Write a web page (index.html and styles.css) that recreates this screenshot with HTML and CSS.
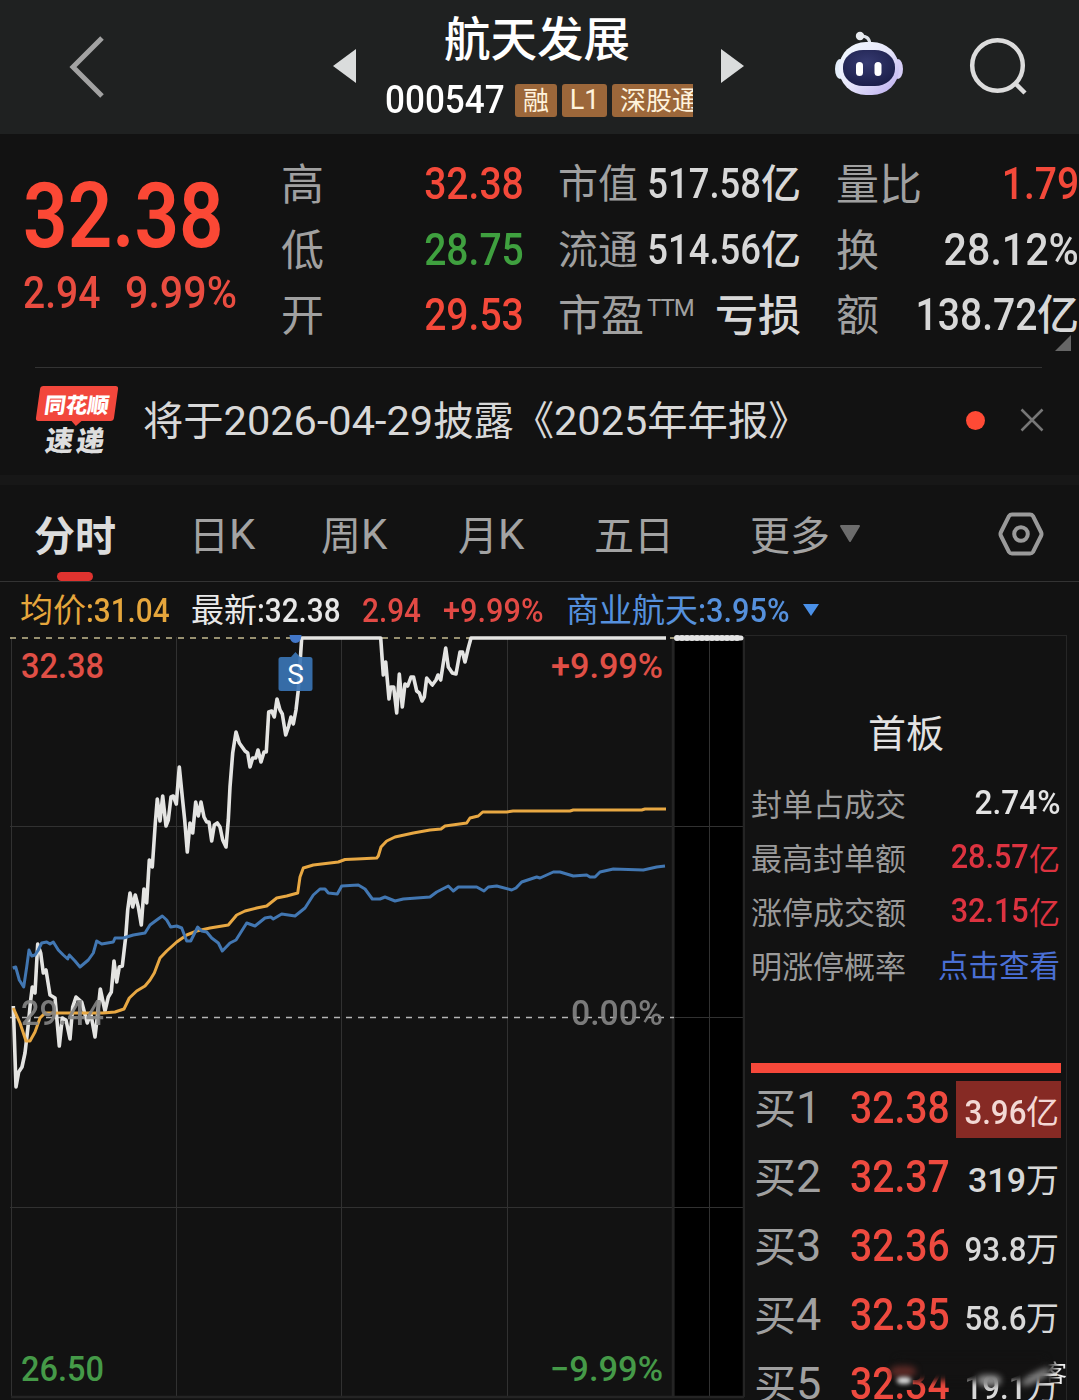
FILE: index.html
```html
<!DOCTYPE html>
<html lang="zh-CN">

<head>
    <meta charset="UTF-8">
    <meta name="viewport" content="width=device-width, initial-scale=1.0">
    <title>航天发展 000547</title>
    <link rel="stylesheet" href="styles.css">
</head>

<body>
    <header class="topbar">
        <svg class="back" viewBox="0 0 40 64"><path d="M34 3 L5 32 L34 61" /></svg>
        <svg class="arrow prev" viewBox="0 0 24 34"><path d="M0 17 L23 0 V34 Z" /></svg>
        <div class="stock">
            <h1>航天发展</h1>
            <div class="code-row">
                <span class="code"><span class="n left">000547</span></span>
                <span class="tag">融</span>
                <span class="tag l1">L1</span>
                <span class="tag last">深股通</span>
            </div>
        </div>
        <svg class="arrow next" viewBox="0 0 24 34"><path d="M23 17 L0 0 V34 Z" /></svg>
        <svg class="robot" viewBox="0 0 70 66">
            <defs>
                <linearGradient id="shell" x1="0" y1="0" x2="1" y2="1">
                    <stop offset="0" stop-color="#f4fbff" />
                    <stop offset=".5" stop-color="#e6e6fa" />
                    <stop offset="1" stop-color="#b9a9ee" />
                </linearGradient>
                <radialGradient id="face" cx=".45" cy=".35" r=".7">
                    <stop offset="0" stop-color="#363a70" />
                    <stop offset="1" stop-color="#1a1d48" />
                </radialGradient>
            </defs>
            <path d="M26 5 Q35 4 36 13" fill="none" stroke="#dfe3ea" stroke-width="3" />
            <circle cx="26" cy="5" r="4.2" fill="#e8ebf0" />
            <ellipse cx="6" cy="38" rx="5" ry="10" fill="#e4eefa" />
            <ellipse cx="64" cy="38" rx="5" ry="10" fill="#d6cdf6" />
            <rect x="5" y="11" width="60" height="53" rx="27" ry="26" fill="url(#shell)" />
            <rect x="9" y="19" width="52" height="36" rx="20" ry="17" fill="url(#face)" />
            <rect x="22" y="31" width="7" height="14" rx="3.5" fill="#fff" />
            <rect x="40.500" y="31" width="7" height="14" rx="3.5" fill="#fff" />
        </svg>
        <svg class="search" viewBox="0 0 60 60"><circle cx="28.500" cy="28.500" r="25.300" /><path d="M46 46 L56 56" /></svg>
    </header>

    <section class="quote">
        <div class="price">
            <div class="big"><span class="n left">32.38</span></div>
            <div class="change"><span class="n left">2.94</span><span class="n left pct">9.99%</span></div>
        </div>
        <dl class="col col-a">
            <dt>高</dt><dd class="up"><span class="n">32.38</span></dd>
            <dt>低</dt><dd class="down"><span class="n">28.75</span></dd>
            <dt>开</dt><dd class="up"><span class="n">29.53</span></dd>
        </dl>
        <dl class="col col-b">
            <dt>市值</dt><dd><span class="n">517.58</span>亿</dd>
            <dt>流通</dt><dd><span class="n">514.56</span>亿</dd>
            <dt class="pe">市盈<sup>TTM</sup></dt><dd class="loss">亏损</dd>
        </dl>
        <dl class="col col-c">
            <dt>量比</dt><dd class="up"><span class="n">1.79</span></dd>
            <dt>换</dt><dd><span class="n pct">28.12%</span></dd>
            <dt>额</dt><dd><span class="n">138.72</span>亿</dd>
        </dl>
        <svg class="corner" viewBox="0 0 16 16"><path d="M16 0 V16 H0 Z" /></svg>
    </section>

    <section class="notice">
        <div class="express">
            <span class="bubble">同花顺</span>
            <span class="sudi">速递</span>
        </div>
        <p>将于<span class="date">2026-04-29</span>披露《<span class="date">2025</span>年年报》</p>
        <i class="dot"></i>
        <svg class="close" viewBox="0 0 24 24"><path d="M1.500 1.500 L22.500 22.500 M22.500 1.500 L1.500 22.500" /></svg>
    </section>

    <nav class="tabs">
        <a class="active">分时</a>
        <a>日<b>K</b></a>
        <a>周<b>K</b></a>
        <a>月<b>K</b></a>
        <a>五日</a>
        <a>更多<svg class="caret" viewBox="0 0 22 18"><path d="M2 1 H20 L11 16 Z" /></svg></a>
        <svg class="setting" viewBox="0 0 46 44">
            <path d="M14 2.500 H32 Q34 2.500 35 4 L43 20 Q44 22 43 24 L35 40 Q34 41.500 32 41.500 H14 Q12 41.500 11 40 L3 24 Q2 22 3 20 L11 4 Q12 2.500 14 2.500 Z" />
            <circle cx="23" cy="22" r="6.800" />
        </svg>
    </nav>

    <div class="legend">
        <span class="avg">均价<span class="n left">:31.04</span></span>
        <span class="latest">最新<span class="n left">:32.38</span></span>
        <span class="rise"><span class="n left">2.94</span></span>
        <span class="rise"><span class="n left pct">+9.99%</span></span>
        <span class="sector">商业航天<span class="n left pct">:3.95%</span></span>
        <svg viewBox="0 0 18 12"><path d="M1 0 H17 L9 12 Z" /></svg>
    </div>

    <main class="trade">
        <svg class="chart" viewBox="0 634 745 766">
            <rect x="675" y="637" width="69" height="760" fill="#000" />
            <g class="grid">
                <path d="M11.500 637 V1397 M176.500 637 V1397 M341.500 637 V1397 M507.500 637 V1397 M709.500 637 V1397" />
                <path d="M10 826.500 H744 M10 1207.500 H744 M672 1017.500 H744" />
                <path class="frame" d="M673 637 V1397 M744 637 V1397 M11 1397 H744" />
            </g>
            <path class="dash top" d="M10 638 H674" />
            <path class="dash" d="M10 1017.500 H674" />
            <polyline class="line price-line" points="13.3,1006 16,1087 18.7,1072 22,1067 25,1053 28,1027 30.7,1000 32.3,987 35,993 37.7,944 40.7,953 43.3,973 46,970 50,995 55,998 59.3,1046 62.3,1018 66,1020 70,1039 72.7,1007 76,997 81.7,1002 87.3,1023 90.7,1013 95,1037 97.3,1017 100.3,989 105,1011 108.3,997 111.3,992 114,961 116.7,982 119.3,967 122.3,966 125.7,937 127.7,910 130,893 132.7,907 135.3,895 138.3,907 141.3,925 144,889 146.7,903 149.3,860 152.3,867 155.3,823 157.3,799 160,821 162.7,796 166,826 168.3,820 171,797 173.3,796 176.3,804 179.3,767 182.3,797 184.7,820 187.3,852 190,823 192.7,833 195.7,802 198.3,816 201,802 204,817 206.7,822 209,822 211.7,841 214.3,825 217.3,823 220,827 222.7,840 226,847 228.3,820 230,787 232.7,753 236,732 239.3,743 245,751 247.7,753 250,767 252.7,758 255.7,758 258,750 261,762 264,752 266.3,752 268.7,712 271.7,711 274.3,717 277,699 280,710 282.3,714 285.7,735 288.7,726 291,717 293.3,724 296,710 298.3,690 301.7,638 380.7,638 383.3,675 385.7,662 389,699 390.7,687 393.7,687 396.7,713 399.3,674 402.3,707 405,684 407.7,686 411,677 413.5,677 416.7,691 419.3,693 422,701 424.3,697 426.7,678 432.3,685 436,680 438,675 440.7,680 443.3,663 445.7,648 448.3,667 452.3,673 456,674 460,652 462.5,652 465,662 468.3,648 471,638 666,638" />
            <polyline class="line avg-line" points="13.3,1008 20,1023 26,1041 30,1041 35,1032 40,1018 45,1013 67,1013 103,1013 115,1012 124,1009 129.3,998 136.7,991 145,986 150,980 154.3,973 160,958 166.7,951 176.7,942 186.7,935 196.7,931 210,928 228.3,925 236.7,915 245,911 256.7,908 266.7,906 276.7,898 286.7,896 297.7,893 300,877 303.3,868 313.3,865 338.3,862 345,859.500 356.7,859 376.7,858 378.3,856 381,847 386.7,841 395,837 413.3,833 430,830 441,829 445,826 466.7,823 470,818 478.3,816 482.7,812 506.7,812 513,811 570,811 573.3,810 641.7,810 645,809 666,809" />
            <polyline class="line sector-line" points="12.7,968 15.7,967 19.3,980 23.7,987 26.7,967 29,950 31.7,956 35,955 38.3,950 41.7,943 46.7,942 50,944 53.3,942 58.3,950 63.3,955 67.7,959 69.3,955 75,961 80,967 88.3,960 93.3,953 96.7,941 101.7,944 113.3,942 115,938 123.3,938 133.3,935 145,933 150,925 156.7,920 162.3,916 166.7,920 170.7,927 176.7,926 181.7,928 186.7,941 190.7,941 197.7,927 201.7,931 206.7,932 211.7,938 218.3,943 222.3,951 230,943 236,940 246.7,923 255,926 265,918 270.7,917 273.3,919 281.7,914 295,916 305,908 313.3,895 320,889 325,889 328.3,893 337.3,894 341.7,886 358.3,885 365,889 372.3,899 380,899 385,897 395,901 403.3,899 430,897 436.7,892 448.3,886 453.3,891 458.3,887 476.7,887 484,891 488.3,887 496.7,886 511.7,890 516,888 521.7,882 536.7,877 540,878 553.3,872 560,872 573.3,876 586.7,875 590,877 595,877 600,872 613.3,869 643.3,870 656.7,867 665,866" />
            <path class="sealed" d="M677 638 H741" />
            <path class="sealed bumps" d="M677 638 H742" />

            <path class="sell" d="M289.500 635 H301.500 Q301 643 295.500 643 Q290 643 289.500 635 Z" />
            <path class="sell box" d="M291 657 L295.500 652 L300 657 H310 Q312.500 657 312.500 659.500 V688.500 Q312.500 691 310 691 H281 Q278.500 691 278.500 688.500 V659.500 Q278.500 657 281 657 Z" />
            <text class="s" x="295.500" y="684" text-anchor="middle">S</text>

            <text class="axis up" x="21" y="678" textLength="83" lengthAdjust="spacingAndGlyphs">32.38</text>
            <text class="axis up" x="551" y="678" textLength="112" lengthAdjust="spacingAndGlyphs">+9.99%</text>
            <text class="axis flat" x="21" y="1025" textLength="83" lengthAdjust="spacingAndGlyphs">29.44</text>
            <text class="axis flat" x="571" y="1025" textLength="92" lengthAdjust="spacingAndGlyphs">0.00%</text>
            <text class="axis down" x="21" y="1381" textLength="83" lengthAdjust="spacingAndGlyphs">26.50</text>
            <text class="axis down" x="550" y="1381" textLength="113" lengthAdjust="spacingAndGlyphs">−9.99%</text>
        </svg>

        <aside class="side">
            <h2>首板</h2>
            <ul class="board">
                <li>封单占成交<span class="val white"><span class="n pct">2.74%</span></span></li>
                <li>最高封单额<span class="val"><span class="n">28.57</span>亿</span></li>
                <li>涨停成交额<span class="val"><span class="n">32.15</span>亿</span></li>
                <li>明涨停概率<span class="link">点击查看</span></li>
            </ul>
            <div class="bar"></div>
            <ul class="bids">
                <li><span class="lv">买<b>1</b></span><span class="px"><span class="n left">32.38</span></span><span class="vol hot"><span class="n">3.96</span>亿</span></li>
                <li><span class="lv">买<b>2</b></span><span class="px"><span class="n left">32.37</span></span><span class="vol whole"><span class="n">319</span>万</span></li>
                <li><span class="lv">买<b>3</b></span><span class="px"><span class="n left">32.36</span></span><span class="vol"><span class="n">93.8</span>万</span></li>
                <li><span class="lv">买<b>4</b></span><span class="px"><span class="n left">32.35</span></span><span class="vol"><span class="n">58.6</span>万</span></li>
                <li><span class="lv">买<b>5</b></span><span class="px"><span class="n left">32.34</span></span><span class="vol"><span class="n">19.1</span>万</span></li>
            </ul>
            <!-- smeared strip over the last row -->
            <div class="smear"><i class="s1"></i><i class="s2"></i><i class="s3"></i><i class="s4"></i><i class="s5"></i><em>客</em></div>
        </aside>
    </main>
</body>

</html>
```
FILE: styles.css
```css
* {
    box-sizing: border-box;
}

body {
    margin: 0;
    width: 1079px;
    height: 1400px;
    overflow: hidden;
    background-color: #121212;
    color: #d8d8d8;
    font-family: "Noto Sans CJK SC", sans-serif;
}

h1, h2, p, ul, dl, dd {
    margin: 0;
    padding: 0;
    font-weight: normal;
    list-style: none;
}

svg {
    display: block;
    flex: none;
}

/* narrow digits */
.n {
    display: inline-block;
    flex: none;
    font-family: Roboto, sans-serif;
    font-weight: 500;
    transform: scaleX(.868);
    transform-origin: right;
}

.n.pct {
    transform: scaleX(.915);
}

.n.left {
    transform-origin: left;
}

.up {
    color: #f4493a;
}

.down {
    color: #3fa03f;
}

/* header */
.topbar {
    display: flex;
    height: 134px;
    background-color: #1f2121;
}

.back {
    width: 40px;
    height: 64px;
    margin: 35px 0 0 68px;
    fill: none;
    stroke: #a2a2a2;
    stroke-width: 5;
}

.arrow {
    width: 24px;
    height: 34px;
    margin-top: 49px;
    fill: #dadcdc;
}

.prev {
    margin-left: 225px;
}

.stock {
    width: 308px;
    margin: 0 28px 0 28px;
    color: #fff;
}

.stock h1 {
    height: 78px;
    padding-left: 59px;
    font-size: 46.500px;
    font-weight: 500;
    line-height: 71px;
    white-space: nowrap;
}

.code-row {
    display: flex;
    align-items: center;
    height: 44px;
    overflow: hidden;
}

.code {
    display: flex;
    width: 130px;
    flex: none;
    font-size: 39px;
    line-height: 44px;
}

.code .n {
    transform: scaleX(.9);
}

.tag {
    flex: none;
    width: 42px;
    height: 33px;
    margin-right: 5px;
    border-radius: 3px;
    background-color: #9c673a;
    color: #fff3dc;
    font-size: 26px;
    line-height: 30px;
    text-align: center;
}

.tag.l1 {
    width: 45px;
    font-family: Roboto, sans-serif;
    font-size: 27px;
    line-height: 33px;
}

.tag.last {
    width: 96px;
    margin: 0;
    padding-left: 8px;
    text-align: left;
}

.next {
    margin-right: 89px;
}

.robot {
    width: 70px;
    height: 66px;
    margin-top: 31px;
}

.search {
    width: 60px;
    height: 60px;
    margin: 37px 0 0 65px;
    fill: none;
    stroke: #dcdcdc;
    stroke-width: 4.500;
}

/* quote */
.quote {
    position: relative;
    display: flex;
    height: 233px;
    padding-top: 17px;
}

.quote::after {
    content: "";
    position: absolute;
    left: 35px;
    right: 37px;
    bottom: -1px;
    height: 1px;
    background-color: #333;
}

.price {
    width: 281px;
    padding-left: 23px;
    color: #fb4835;
}

.big {
    display: flex;
    height: 118px;
    padding-top: 14px;
    font-size: 90px;
    line-height: 104px;
}

.big .n {
    font-weight: 600;
}

.change {
    display: flex;
    gap: 13px;
    font-size: 45px;
    line-height: 48px;
    color: #e94c40;
}

.col {
    display: grid;
    grid-auto-rows: 65.500px;
    height: 197px;
    line-height: 65px;
    white-space: nowrap;
}

.col dt {
    color: #a0a0a0;
    font-size: 43px;
    line-height: 61px;
}

.col dd {
    display: flex;
    justify-content: flex-end;
    font-size: 43px;
    font-weight: 500;
    line-height: 60px;
}

.col dd .n {
    font-size: 45px;
    line-height: 65px;
}

.col-a {
    grid-template-columns: 143px 100px;
    width: 277px;
}

.col-b {
    grid-template-columns: 81px 162px;
    width: 278px;
}

.col-b dt {
    font-size: 40px;
}

.col-b dd {
    font-size: 40px;
}

.col-b dd .n {
    font-size: 42px;
    line-height: 65px;
}

.col-b .pe {
    font-size: 43px;
}

.pe sup {
    margin-left: 3px;
    font-family: Roboto, sans-serif;
    font-size: 24px;
    letter-spacing: -1px;
    line-height: 0;
    vertical-align: 15px;
}

.col-b .loss {
    font-size: 43px;
    line-height: 61px;
}

.col-c {
    grid-template-columns: 70px 173px;
}

.col-c dd {
    font-size: 42px;
}

.corner {
    position: absolute;
    left: 1055px;
    top: 201px;
    width: 16px;
    height: 16px;
    fill: #666;
}

/* notice */
.notice {
    display: flex;
    align-items: center;
    height: 118px;
    padding: 0 35px 2px 36px;
    border-bottom: 10px solid #171717;
}

.express {
    width: 82px;
    height: 68px;
    margin: 0 25px 0 0;
    color: #fff;
    font-weight: 900;
    text-align: center;
}

.bubble {
    position: relative;
    display: block;
    width: 78px;
    height: 35px;
    margin-left: 2px;
    border-radius: 3px;
    background-color: #f2473c;
    font-size: 21.500px;
    line-height: 35px;
    transform: skewX(-8deg);
}

.bubble::after {
    content: "";
    position: absolute;
    left: 36px;
    top: 35px;
    border: 5px solid transparent;
    border-top-color: #f2473c;
    border-bottom: 0;
}

.sudi {
    display: block;
    font-size: 28px;
    letter-spacing: 3px;
    line-height: 36px;
    color: #dedede;
    transform: skewX(-8deg);
}

.notice p {
    flex: 1;
    font-size: 40.300px;
    line-height: 56px;
    padding-bottom: 2px;
    white-space: nowrap;
}

.date {
    font-family: Roboto, sans-serif;
    font-size: 41.500px;
}

.dot {
    width: 19px;
    height: 19px;
    margin-right: 35px;
    border-radius: 50%;
    background-color: #ff4a35;
}

.close {
    width: 24px;
    height: 24px;
    fill: none;
    stroke: #777;
    stroke-width: 2.500;
}

/* tabs */
.tabs {
    display: grid;
    grid-template-columns: 155px 132px 137px 136px 156px 248px 46px;
    height: 97px;
    padding-left: 34px;
    border-bottom: 1px solid #333;
    color: #a3a3a3;
    font-size: 40px;
    line-height: 96px;
}

.tabs a {
    position: relative;
    display: flex;
    height: 96px;
}

.tabs b {
    font-family: Roboto, sans-serif;
    font-size: 42px;
    font-weight: 400;
    line-height: 100px;
}

.tabs .active {
    color: #dcdcdc;
    font-size: 41px;
    font-weight: 700;
}

.tabs .active::after {
    content: "";
    position: absolute;
    left: 23px;
    bottom: 0;
    width: 36px;
    height: 9px;
    border-radius: 5px;
    background-color: #e0332f;
}

.caret {
    width: 22px;
    height: 18px;
    margin: 40px 0 0 9px;
    fill: #6c6c6c;
    stroke: #6c6c6c;
    stroke-linejoin: round;
    stroke-width: 2;
}

.setting {
    width: 46px;
    height: 44px;
    margin-top: 27px;
    fill: none;
    stroke: #9a9a9a;
    stroke-width: 4;
}

/* legend above the chart */
.legend {
    display: grid;
    grid-template-columns: 171px 171px 81px 123px 236px 18px;
    align-items: center;
    height: 52px;
    padding: 3px 0 0 20px;
    font-size: 33px;
    line-height: 46px;
    white-space: nowrap;
}

.legend .n {
    font-size: 33px;
    transform: scaleX(.9);
}

.legend .n.pct {
    transform: scaleX(.93);
}

.avg {
    color: #e5a63c;
}

.latest {
    color: #e8e8e8;
}

.rise {
    color: #e24a45;
}

.sector {
    color: #5590dc;
}

.legend svg {
    width: 18px;
    height: 12px;
    fill: #4a90e8;
}

/* chart */
.trade {
    display: flex;
    height: 766px;
}

.chart {
    width: 745px;
    height: 766px;
}

.grid path {
    fill: none;
    stroke: #313131;
    stroke-width: 1;
}

.grid .frame {
    stroke: #242424;
    stroke-width: 2.500;
}

.dash {
    stroke: #b5b5b5;
    stroke-width: 1.600;
    stroke-dasharray: 6 6;
}

.dash.top {
    stroke: #c4ba90;
}

.line {
    fill: none;
    stroke-width: 3;
    stroke-linejoin: round;
}

.price-line {
    stroke: #e4e4e2;
    stroke-width: 3.600;
}

.avg-line {
    stroke: #e8a843;
}

.sector-line {
    stroke: #4277b2;
}

.sealed {
    stroke: #e4e4e4;
    stroke-width: 5;
    stroke-linecap: round;
}

.sealed.bumps {
    stroke-width: 6;
    stroke-dasharray: 0 5;
}

.sell {
    fill: #4277c8;
}

.sell.box {
    fill: #3a74b4;
    opacity: .92;
}

.s {
    fill: #fff;
    font-family: Roboto, sans-serif;
    font-size: 28px;
}

.axis {
    font-family: Roboto, sans-serif;
    font-size: 35px;
    font-weight: 500;
}

.axis.up {
    fill: #e04f46;
}

.axis.flat {
    fill: #868686;
    opacity: .9;
}

.axis.down {
    fill: #459a48;
}

/* right panel */
.side {
    position: relative;
    width: 322px;
    height: 766px;
    margin-top: 1px;
    padding-left: 6px;
    border: 1px solid #262626;
    border-left: 0;
    border-bottom: 0;
}

.side h2 {
    height: 142px;
    padding: 67px 0 0 117px;
    font-size: 38px;
    line-height: 56px;
    color: #e2e2e2;
}

.board {
    height: 285px;
    padding-right: 6px;
}

.board li {
    display: flex;
    justify-content: space-between;
    height: 54px;
    font-size: 31px;
    line-height: 49px;
    color: #9a9a9a;
}

.val {
    display: flex;
    color: #dd3340;
}

.val .n {
    font-size: 34px;
    line-height: 48px;
    transform: scaleX(.9);
}

.val .n.pct {
    transform: scaleX(.93);
}

.val.white {
    color: #e4e4e4;
}

.board .link {
    color: #4a6fd4;
    font-size: 30.500px;
}

.bar {
    width: 310px;
    height: 10px;
    background-color: #f6483a;
}

.bids li {
    display: grid;
    grid-template-columns: 99px 106px 105px;
    height: 69px;
    line-height: 69px;
    white-space: nowrap;
}

.lv {
    display: flex;
    padding-left: 3px;
    color: #a0a0a0;
    font-size: 42px;
    line-height: 65px;
}

.lv b {
    font-family: Roboto, sans-serif;
    font-size: 45px;
    font-weight: 400;
    line-height: 70px;
}

.px {
    display: flex;
    color: #ee4a3f;
    font-size: 45px;
    line-height: 70px;
}

.vol {
    display: flex;
    justify-content: flex-end;
    padding-right: 2px;
    font-size: 33px;
    line-height: 73px;
}

.vol .n {
    font-size: 34px;
    line-height: 77px;
    transform: scaleX(.92);
}

.vol.whole .n {
    transform: none;
}

.hot {
    height: 57px;
    margin-top: 8px;
    background-color: #862a24;
    color: #f3d8d4;
    line-height: 58px;
}

.vol.hot .n {
    line-height: 62px;
}

.smear {
    position: absolute;
    left: 135px;
    top: 722px;
    width: 190px;
    height: 30px;
}

.smear i {
    position: absolute;
    border-radius: 40%;
    filter: blur(3px);
}

.smear .s1 {
    left: 16px;
    top: 0;
    width: 150px;
    height: 23px;
    border-radius: 4px;
    background-color: #131212;
}

.smear .s2 {
    left: 10px;
    top: 8px;
    width: 26px;
    height: 11px;
    background-color: #5c2a26;
}

.smear .s3 {
    left: 17px;
    top: 19px;
    width: 14px;
    height: 7px;
    background-color: #ddd;
    filter: blur(2px);
}

.smear .s4 {
    left: 97px;
    top: 17px;
    width: 24px;
    height: 11px;
    background-color: #909090;
}

.smear .s5 {
    left: 140px;
    top: 15px;
    width: 32px;
    height: 8px;
    background-color: #8a8a8a;
    transform: rotate(-28deg);
}

.smear em {
    position: absolute;
    left: 163px;
    top: 2px;
    color: #eee;
    font-size: 24px;
    font-style: normal;
    line-height: 24px;
    -webkit-mask-image: linear-gradient(90deg, transparent 20%, #000 70%);
    mask-image: linear-gradient(90deg, transparent 20%, #000 70%);
}
```
